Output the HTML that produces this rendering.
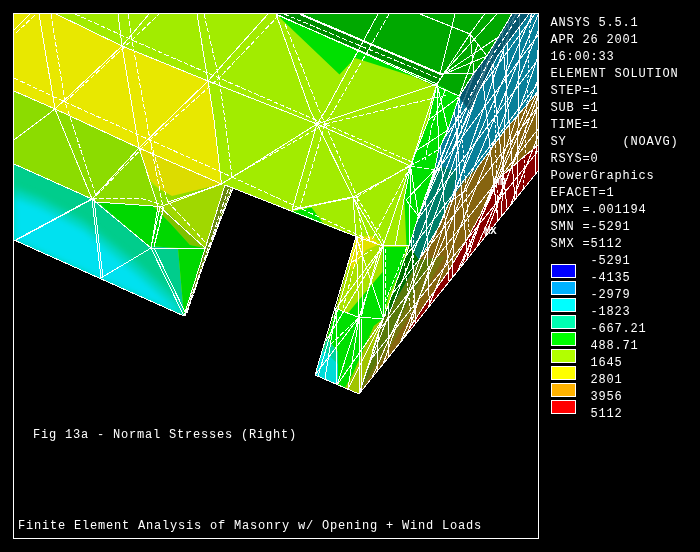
<!DOCTYPE html><html><head><meta charset="utf-8"><title>ANSYS plot</title><style>
html,body{margin:0;padding:0;background:#000}body{width:700px;height:552px;position:relative;overflow:hidden}
.t{position:absolute;font-family:"Liberation Mono",monospace;font-size:12px;letter-spacing:0.8px;line-height:16px;height:16px;color:#fff;white-space:pre}
.s{font-size:10.5px;letter-spacing:0;font-weight:bold}
</style></head><body>
<svg width="700" height="552" viewBox="0 0 700 552" style="position:absolute;left:0;top:0">
<defs>
<filter id="bl" x="-20%" y="-20%" width="140%" height="140%"><feGaussianBlur stdDeviation="3"/></filter><clipPath id="tclip"><polygon points="14,164 92,199 97,201.5 149,246 178,248 184,316 14,240"/></clipPath><clipPath id="sclip"><polygon points="512,14 538,14 538,171 359,394 383.5,318.5 409.5,245 418.5,216 434.6,170 438.6,150 448,130 459,97 474,73 487,56"/></clipPath><clipPath id="clip"><rect x="14" y="14" width="524" height="524"/></clipPath></defs>
<rect width="700" height="552" fill="#000"/>
<g clip-path="url(#clip)">
<polygon points="14,14 276,14 459,96 448,130 438.6,150 434.6,170 418.5,216 409.5,245 383.5,318.5 359,394 315,375 336,308.5 356,236.5 225,185 184,316 14,240" fill="#a2ec00" />
<polygon points="14,14 56,14 122,46 208,81 214,120 221.5,183.7 139,148 55,109 14,91" fill="#e8e800" />
<polygon points="139,148 221.5,184 170,199 150,180" fill="#dcdc00" />
<polygon points="14,91 55,109 139,148 151,184 172,196 221.5,184 225,185 205,248 190,245 170,223 153,206 96,202 92,199 14,164" fill="#8cdc00" />
<polygon points="162,207 168,202 221.5,184 225,185 205,248" fill="#a0d800" />
<polygon points="153,206 162,207 205,248 190,245 170,223" fill="#80c000" />
<polygon points="14,164 92,199 97,201.5 149,246 178,248 184,316 14,240" fill="#00cd8c" />
<polygon points="14,188 40,198 84,221 138,264 178,300 184,316 14,240" fill="#00d7be" filter="url(#bl)" clip-path="url(#tclip)"/>
<polygon points="14,197 40,207 84,230 138,275 184,316 14,240" fill="#00e1f0" filter="url(#bl)" clip-path="url(#tclip)"/>
<polygon points="96,202 153,206 170,223 190,245 205,248 184,316 178,248 149,246 97,201.5" fill="#00d800" />
<polygon points="276,14 512,14 487,56 474,73 459,97" fill="#00a800" />
<polygon points="276,14 300,14 443,75 437,84" fill="#008c00" />
<polygon points="276,14 339.5,74.5 355,58 437,84" fill="#00e000" />
<polygon points="437,84 459,96 448,130 438.6,150 434.6,170 418.5,216 409.5,245 406.5,246.6 404.4,200 407.5,170 410.5,166 416.5,150.5 428.5,120" fill="#00e000" />
<polygon points="356,237 372,236 380,244 366,250 352,270 349,262" fill="#e2e200" />
<polygon points="356,236.5 383,246 382.5,272 348,313 336,308.5" fill="#aae200" />
<polygon points="356,237 372,236 380,244 366,250 352,270 349,262" fill="#e2e200" />
<polygon points="382.5,247 406.6,247 400.6,270 388.5,296 383.5,318.5 360,317.5 348,313 382.5,272" fill="#00e000" />
<polygon points="336,308.5 359,317.5 383.5,318.5 374,326 353,374 345,388 338,385 338,352 327,338" fill="#00e000" />
<polygon points="315,375 327,338 338,352 338,385" fill="#00d49c" />
<polygon points="315,375 323,350 338,364 338,385" fill="#00dcd8" />
<polygon points="383.5,318.5 359,394 345,388 353,374 374,326" fill="#a0c400" />
<polygon points="291,211.7 311.5,207.4 323.5,223.7 346,233" fill="#00e000" />
<polygon points="225,185 233,188 219,224 203,266 185,316 184,316" fill="#6a8a10" />
<polygon points="512,14 538,14 538,171 359,394 383.5,318.5 409.5,245 418.5,216 434.6,170 438.6,150 448,130 459,97 474,73 487,56" fill="#08809a" />
<polygon points="512,14 530,14 497,57 477,93 470,110 459,97 474,73 487,56" fill="#06586e" />
<polygon points="531,100 538,91 538,171 359,394 383.5,318.5 389,312 419,260 440,225 449,203 465,180 477,168 505,130" fill="#866410" />
<polygon points="419,260 433,258 400,318.5 377.5,360 359,394 383.5,318.5 386,316" fill="#587a0a" />
<polygon points="433,258 445,256 408,318.5 381,362 359,394 377.5,360 400,318.5" fill="#74760e" />
<polygon points="437,165 458,172 449,203 440,225 419,258 409.5,245 418.5,216 434.6,170" fill="#00806a" />
<polygon points="409.5,245 419,260 386,316 383.5,318.5" fill="#007000" />
<polygon points="538,145 520,160 494,183 481,214 466,241 448,272 426,303 402,340 538,171" fill="#8a0000" />
<g fill="none" stroke="#fff" stroke-width="1" shape-rendering="crispEdges">
<polyline points="14,30 30,14"/>
<polyline points="39,14 55,109"/>
<polyline points="56,14 122,46 208,81 317,124"/>
<polyline points="118,14 122,46 139,148 158,206 151,248"/>
<polyline points="55,109 122,46 149,14"/>
<polyline points="14,91 55,109 139,148 221.5,184"/>
<polyline points="55,109 14,140"/>
<polyline points="55,109 92,199"/>
<polyline points="14,164 92,199"/>
<polyline points="92,199 139,148 208,81 268,14"/>
<polyline points="92,199 96,202 153,206 160,207"/>
<polyline points="92,199 16,240" stroke-width="1.5"/>
<polyline points="92,199 101,278"/>
<polyline points="94,199 103,278"/>
<polyline points="92,199 151,248"/>
<polyline points="151,248 101,278"/>
<polyline points="151,248 184,316"/>
<polyline points="154,248 186,314"/>
<polyline points="151,248 205,248"/>
<polyline points="160,207 205,248"/>
<polyline points="160,207 221.5,184"/>
<polyline points="160,207 151,248"/>
<polyline points="164,207 154,247"/>
<polyline points="197,14 208,81 214,120 221.5,184"/>
<polyline points="221.5,184 317,124"/>
<polyline points="14,240 184,316 225,185 356,236.5 315,375 359,394 538,171"/>
<polyline points="185,316 203,266 219,224 233,188 225,185"/>
<polyline points="186,313 229,187" stroke-dasharray="5 2"/>
<polyline points="187,313 212,240 231,189" stroke-dasharray="5 2"/>
<polyline points="276,14 459,96"/>
<polyline points="300,14 443,75" stroke-width="2"/>
<polyline points="284,14 440,79" stroke-dasharray="5 2"/>
<polyline points="277,15 437,84"/>
<polyline points="276,14 310,110 317,124"/>
<polyline points="378,14 326,110 317,124"/>
<polyline points="317,124 437,84"/>
<polyline points="317,124 410.5,166"/>
<polyline points="317,124 353,197"/>
<polyline points="317,124 292,210"/>
<polyline points="353,197 292,210" stroke-width="1.5"/>
<polyline points="353,197 410.5,166"/>
<polyline points="353,197 356,236.5"/>
<polyline points="353,197 383,246"/>
<polyline points="410.5,166 383,246"/>
<polyline points="410.5,166 437,84"/>
<polyline points="410.5,166 409.5,245"/>
<polyline points="383,246 356,236.5"/>
<polyline points="383,246 409.5,245"/>
<polyline points="383,246 359,317.5"/>
<polyline points="383,246 383.5,318.5"/>
<polyline points="383,246 336,308.5"/>
<polyline points="336,308.5 359,317.5 383.5,318.5"/>
<polyline points="359,317.5 315,375"/>
<polyline points="359,317.5 337,385"/>
<polyline points="359,317.5 359,394"/>
<polyline points="336,308.5 337,385"/>
<polyline points="383.5,318.5 337,385"/>
<polyline points="359,317.5 356,236.5"/>
<polyline points="336,308.5 383,246"/>
<polyline points="512,14 487,56 474,73 459,97 448,130 438.6,150 434.6,170 418.5,216 409.5,245 383.5,318.5 359,394"/>
<polyline points="16,33 36,14" stroke-dasharray="5 2"/>
<polyline points="51,14 65,102 96,196" stroke-dasharray="5 2"/>
<polyline points="75,14 132,40 219,78 325,124" stroke-dasharray="5 2"/>
<polyline points="128,14 132,40 150,140 163,207 154,247" stroke-dasharray="5 2"/>
<polyline points="14,78 65,102 150,140 232,177" stroke-dasharray="5 2"/>
<polyline points="65,102 132,40 159,14" stroke-dasharray="5 2"/>
<polyline points="96,196 150,140 219,78 280,14" stroke-dasharray="5 2"/>
<polyline points="92,199 140,198 163,205" stroke-dasharray="5 2"/>
<polyline points="204,14 219,78 225,120 232,177" stroke-dasharray="5 2"/>
<polyline points="232,177 325,124" stroke-dasharray="5 2"/>
<polyline points="285,24 319,110 325,124" stroke-dasharray="5 2"/>
<polyline points="389,14 334,110 325,124" stroke-dasharray="5 2"/>
<polyline points="325,124 447,95" stroke-dasharray="5 2"/>
<polyline points="325,124 357,197" stroke-dasharray="5 2"/>
<polyline points="325,124 300,208" stroke-dasharray="5 2"/>
<polyline points="325,124 414,163" stroke-dasharray="5 2"/>
<polyline points="232,177 380,245" stroke-dasharray="5 2"/>
<polyline points="357,197 300,208" stroke-dasharray="5 2"/>
<polyline points="357,197 414,163" stroke-dasharray="5 2"/>
<polyline points="357,197 362,236" stroke-dasharray="5 2"/>
<polyline points="420,14 470,34 487,56"/>
<polyline points="470,34 484.5,14"/>
<polyline points="470,34 437,84"/>
<polyline points="400,56 440,74"/>
<polyline points="470,34 474,73"/>
<polyline points="455,14 440,74"/>
<polyline points="440,74 474,73"/>
<polyline points="442,75 500,36"/>
<polyline points="478,44 459,97"/>
<polyline points="356,236.5 383.5,318.5"/>
<polyline points="383,246 326,341"/>
<polyline points="358,238 338,309 318,376"/>
<polyline points="362,237 343,308" stroke-dasharray="5 2"/>
<polyline points="385,248 386,318" stroke-dasharray="5 2"/>
<polyline points="380,247 361,316"/>
<polyline points="407,247 386,300" stroke-dasharray="5 2"/>
<polyline points="359,317.5 348,389"/>
<polyline points="383.5,318.5 348,389"/>
<polyline points="336,308.5 325,379"/>
<polyline points="359,317.5 330,345" stroke-dasharray="5 2"/>
<polyline points="361,319 361,392"/>
<polyline points="383.5,318.5 372,352"/>
<polyline points="353,197 370,240"/>
<polyline points="357,197 386,246" stroke-dasharray="5 2"/>
<polyline points="410.5,166 395,246"/>
<polyline points="410.5,166 372,240" stroke-dasharray="5 2"/>
<polyline points="437,84 428.5,120 416.5,150.5 410.5,166"/>
<polyline points="437,84 448,130"/>
<polyline points="437,84 438.6,150"/>
<polyline points="459,97 428.5,120"/>
<polyline points="448,130 416.5,150.5"/>
<polyline points="438,150 410.5,166" stroke-dasharray="5 2"/>
<polyline points="445,90 432,125 425,160" stroke-dasharray="5 2"/>
<polyline points="410.5,166 434.6,170" stroke-dasharray="5 2"/>
<polyline points="410.5,166 418.5,216"/>
<polyline points="406,200 434.6,170"/>
<polyline points="406,200 418.5,216"/>
<polyline points="442,75 497,14"/>
<polyline points="442,75 487,56"/>
<polyline points="168,202 206,243" stroke-dasharray="5 2"/>
<polyline points="168,202 221.5,184"/>
<polyline points="168,202 150,140" stroke-dasharray="5 2"/>
<polyline points="538,91 531,100 505,130 477,168 466,190 449,203 440,225 419,260"/>
<polyline points="538,145 520,160 494,183 481,214 466,241 448,272 426,303 402,340"/>
<polyline points="362.5,238 362,316"/>
<polyline points="352,262 372,250" stroke-dasharray="5 2"/>
</g>
<g clip-path="url(#sclip)" fill="none" stroke="#fff" stroke-width="1" shape-rendering="crispEdges">
<line x1="682.514" y1="-29" x2="313.332" y2="431"/>
<line x1="662.978" y1="-29" x2="299.629" y2="431"/>
<line x1="643.521" y1="-29" x2="285.823" y2="431"/>
<line x1="624.139" y1="-29" x2="271.919" y2="431"/>
<line x1="604.83" y1="-29" x2="257.922" y2="431"/>
<line x1="585.588" y1="-29" x2="243.835" y2="431"/>
<line x1="566.413" y1="-29" x2="229.663" y2="431"/>
<line x1="547.3" y1="-29" x2="215.41" y2="431"/>
<line x1="528.248" y1="-29" x2="201.078" y2="431"/>
<line x1="509.252" y1="-29" x2="186.672" y2="431"/>
<line x1="490.313" y1="-29" x2="172.194" y2="431"/>
<line x1="471.426" y1="-29" x2="157.647" y2="431"/>
<line x1="452.59" y1="-29" x2="143.034" y2="431"/>
<line x1="433.802" y1="-29" x2="128.357" y2="431"/>
<line x1="415.062" y1="-29" x2="113.62" y2="431"/>
<line x1="396.366" y1="-29" x2="98.8241" y2="431"/>
<line x1="377.714" y1="-29" x2="83.9719" y2="431"/>
<line x1="359.103" y1="-29" x2="69.0656" y2="431"/>
<line x1="340.533" y1="-29" x2="54.1071" y2="431"/>
<line x1="322.001" y1="-29" x2="39.0984" y2="431"/>
<line x1="329.295" y1="400" x2="501.659" y2="0"/>
<line x1="337.404" y1="400" x2="514.556" y2="0"/>
<line x1="343.744" y1="400" x2="504.222" y2="0"/>
<line x1="348.632" y1="400" x2="502.127" y2="0"/>
<line x1="355.35" y1="400" x2="512.403" y2="0"/>
<line x1="362.279" y1="400" x2="538.292" y2="0"/>
<line x1="370.498" y1="400" x2="510.286" y2="0"/>
<line x1="376.095" y1="400" x2="544.262" y2="0"/>
<line x1="384.91" y1="400" x2="520.129" y2="0"/>
<line x1="391.508" y1="400" x2="550.406" y2="0"/>
<line x1="399.905" y1="400" x2="578.695" y2="0"/>
<line x1="406.234" y1="400" x2="570.729" y2="0"/>
<line x1="410.177" y1="400" x2="584.527" y2="0"/>
<line x1="417.634" y1="400" x2="557.842" y2="0"/>
<line x1="423.923" y1="400" x2="574.001" y2="0"/>
<line x1="432.556" y1="400" x2="592.689" y2="0"/>
<line x1="438.991" y1="400" x2="616.75" y2="0"/>
<line x1="443.838" y1="400" x2="612.988" y2="0"/>
<line x1="453.122" y1="400" x2="610.473" y2="0"/>
<line x1="458.457" y1="400" x2="608.356" y2="0"/>
<line x1="465.813" y1="400" x2="629.76" y2="0"/>
<line x1="473.978" y1="400" x2="618.947" y2="0"/>
<line x1="478.576" y1="400" x2="628.978" y2="0"/>
<line x1="486.501" y1="400" x2="624.427" y2="0"/>
<line x1="494.118" y1="400" x2="658.703" y2="0"/>
<line x1="501.921" y1="400" x2="676.254" y2="0"/>
<line x1="506.472" y1="400" x2="649.039" y2="0"/>
<line x1="512.208" y1="400" x2="666.578" y2="0"/>
<line x1="518.557" y1="400" x2="664.832" y2="0"/>
<line x1="528.258" y1="400" x2="678.724" y2="0"/>
<line x1="535.502" y1="400" x2="698.701" y2="0"/>
<line x1="541.581" y1="400" x2="691.086" y2="0"/>
<line x1="547.92" y1="400" x2="703.867" y2="0"/>
<line x1="555.76" y1="400" x2="691.09" y2="0"/>
<line x1="561.096" y1="400" x2="707.546" y2="0"/>
<line x1="566.243" y1="400" x2="711.108" y2="0"/>
<line x1="575.389" y1="400" x2="708.968" y2="0"/>
<line x1="582.888" y1="400" x2="747.654" y2="0"/>
<line x1="587.943" y1="400" x2="734.2" y2="0"/>
<line x1="593.29" y1="400" x2="748.971" y2="0"/>
<line x1="600.672" y1="400" x2="775.065" y2="0"/>
<line x1="607.036" y1="400" x2="749.153" y2="0"/>
<line x1="614.117" y1="400" x2="780.917" y2="0"/>
<line x1="621.964" y1="400" x2="760.031" y2="0"/>
<line x1="627.522" y1="400" x2="783.812" y2="0"/>
<line x1="636.198" y1="400" x2="773.811" y2="0"/>
<line x1="644.077" y1="400" x2="782.429" y2="0"/>
<line x1="648.714" y1="400" x2="806.677" y2="0"/>
<line x1="371.153" y1="0" x2="421.888" y2="400" stroke-dasharray="3 2"/>
<line x1="384.746" y1="0" x2="376.82" y2="400"/>
<line x1="390.057" y1="0" x2="388.614" y2="400"/>
<line x1="400.4" y1="0" x2="419.197" y2="400"/>
<line x1="412.535" y1="0" x2="413.554" y2="400" stroke-dasharray="3 2"/>
<line x1="419.025" y1="0" x2="432.54" y2="400"/>
<line x1="431.216" y1="0" x2="456.523" y2="400"/>
<line x1="444.719" y1="0" x2="479.958" y2="400"/>
<line x1="452.093" y1="0" x2="481.5" y2="400" stroke-dasharray="3 2"/>
<line x1="463.057" y1="0" x2="447.377" y2="400"/>
<line x1="474.397" y1="0" x2="516.795" y2="400"/>
<line x1="484.247" y1="0" x2="528.077" y2="400"/>
<line x1="491.354" y1="0" x2="503.273" y2="400" stroke-dasharray="3 2"/>
<line x1="499.621" y1="0" x2="530.364" y2="400"/>
<line x1="509.373" y1="0" x2="494.761" y2="400"/>
<line x1="520.253" y1="0" x2="513.237" y2="400"/>
<line x1="531.04" y1="0" x2="515.246" y2="400" stroke-dasharray="3 2"/>
<line x1="539.001" y1="0" x2="531.103" y2="400"/>
</g>
<polygon points="512,14 529,14 497,57 478,93 470,112 459,97 474,73 487,56" fill="#06586e" opacity="0.8"/>
<g fill="none" stroke="#fff" stroke-width="1" shape-rendering="crispEdges"><polyline points="512,14 487,56 474,73 459,97 448,130"/><polyline points="529,14 497,57 478,93 470,112 452,150"/><polyline points="520,14 492,56 468,100" stroke-dasharray="5 2"/></g>
</g>
<rect x="13.5" y="13.5" width="525" height="525" fill="none" stroke="#fff" stroke-width="1" shape-rendering="crispEdges"/>
<rect x="551.5" y="264.5" width="24" height="13" fill="#0000ff" stroke="#fff" stroke-width="1" shape-rendering="crispEdges"/>
<rect x="551.5" y="281.5" width="24" height="13" fill="#00b2ff" stroke="#fff" stroke-width="1" shape-rendering="crispEdges"/>
<rect x="551.5" y="298.5" width="24" height="13" fill="#00ffff" stroke="#fff" stroke-width="1" shape-rendering="crispEdges"/>
<rect x="551.5" y="315.5" width="24" height="13" fill="#00ffb2" stroke="#fff" stroke-width="1" shape-rendering="crispEdges"/>
<rect x="551.5" y="332.5" width="24" height="13" fill="#00ff00" stroke="#fff" stroke-width="1" shape-rendering="crispEdges"/>
<rect x="551.5" y="349.5" width="24" height="13" fill="#b2ff00" stroke="#fff" stroke-width="1" shape-rendering="crispEdges"/>
<rect x="551.5" y="366.5" width="24" height="13" fill="#ffff00" stroke="#fff" stroke-width="1" shape-rendering="crispEdges"/>
<rect x="551.5" y="383.5" width="24" height="13" fill="#ffb200" stroke="#fff" stroke-width="1" shape-rendering="crispEdges"/>
<rect x="551.5" y="400.5" width="24" height="13" fill="#ff0000" stroke="#fff" stroke-width="1" shape-rendering="crispEdges"/>
</svg>
<div style="position:absolute;left:0;top:0;width:700px;height:552px;will-change:transform;transform:translateZ(0)">
<div class="t" style="left:550.6px;top:14.6px">ANSYS&nbsp;5.5.1</div>
<div class="t" style="left:550.6px;top:31.6px">APR&nbsp;26&nbsp;2001</div>
<div class="t" style="left:550.6px;top:48.6px">16:00:33</div>
<div class="t" style="left:550.6px;top:65.6px">ELEMENT&nbsp;SOLUTION</div>
<div class="t" style="left:550.6px;top:82.6px">STEP=1</div>
<div class="t" style="left:550.6px;top:99.6px">SUB&nbsp;=1</div>
<div class="t" style="left:550.6px;top:116.6px">TIME=1</div>
<div class="t" style="left:550.6px;top:133.6px">SY&nbsp;&nbsp;&nbsp;&nbsp;&nbsp;&nbsp;&nbsp;(NOAVG)</div>
<div class="t" style="left:550.6px;top:150.6px">RSYS=0</div>
<div class="t" style="left:550.6px;top:167.6px">PowerGraphics</div>
<div class="t" style="left:550.6px;top:184.6px">EFACET=1</div>
<div class="t" style="left:550.6px;top:201.6px">DMX&nbsp;=.001194</div>
<div class="t" style="left:550.6px;top:218.6px">SMN&nbsp;=-5291</div>
<div class="t" style="left:550.6px;top:235.6px">SMX&nbsp;=5112</div>
<div class="t" style="left:550.6px;top:252.6px">&nbsp;&nbsp;&nbsp;&nbsp;&nbsp;-5291</div>
<div class="t" style="left:550.6px;top:269.6px">&nbsp;&nbsp;&nbsp;&nbsp;&nbsp;-4135</div>
<div class="t" style="left:550.6px;top:286.6px">&nbsp;&nbsp;&nbsp;&nbsp;&nbsp;-2979</div>
<div class="t" style="left:550.6px;top:303.6px">&nbsp;&nbsp;&nbsp;&nbsp;&nbsp;-1823</div>
<div class="t" style="left:550.6px;top:320.6px">&nbsp;&nbsp;&nbsp;&nbsp;&nbsp;-667.21</div>
<div class="t" style="left:550.6px;top:337.6px">&nbsp;&nbsp;&nbsp;&nbsp;&nbsp;488.71</div>
<div class="t" style="left:550.6px;top:354.6px">&nbsp;&nbsp;&nbsp;&nbsp;&nbsp;1645</div>
<div class="t" style="left:550.6px;top:371.6px">&nbsp;&nbsp;&nbsp;&nbsp;&nbsp;2801</div>
<div class="t" style="left:550.6px;top:388.6px">&nbsp;&nbsp;&nbsp;&nbsp;&nbsp;3956</div>
<div class="t" style="left:550.6px;top:405.6px">&nbsp;&nbsp;&nbsp;&nbsp;&nbsp;5112</div>
<div class="t" style="left:33px;top:426.8px">Fig&nbsp;13a&nbsp;-&nbsp;Normal&nbsp;Stresses&nbsp;(Right)</div>
<div class="t" style="left:18px;top:517.6px">Finite&nbsp;Element&nbsp;Analysis&nbsp;of&nbsp;Masonry&nbsp;w/&nbsp;Opening&nbsp;+&nbsp;Wind&nbsp;Loads</div>
<div class="t s" style="left:493.5px;top:173.5px">MN</div>
<div class="t s" style="left:484px;top:223px">MX</div>
</div>
</body></html>
